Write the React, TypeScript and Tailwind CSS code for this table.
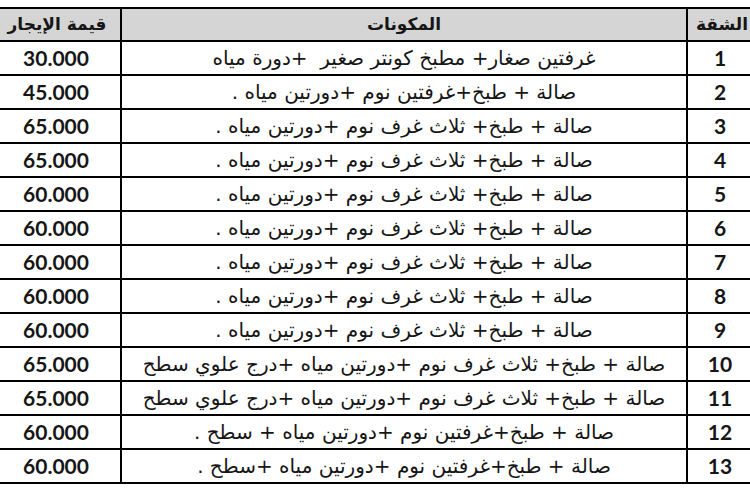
import React from 'react';

type Row = { no: string; desc: string; price: string };

const three = 'صالة + طبخ+ ثلاث غرف نوم +دورتين مياه .';
const upper = 'صالة + طبخ+ ثلاث غرف نوم +دورتين مياه +درج علوي سطح';

const rows: Row[] = [
  { no: '1', desc: 'غرفتين صغار+ مطبخ كونتر صغير  +دورة مياه', price: '30.000' },
  { no: '2', desc: 'صالة + طبخ+غرفتين نوم +دورتين مياه .', price: '45.000' },
  { no: '3', desc: three, price: '65.000' },
  { no: '4', desc: three, price: '65.000' },
  { no: '5', desc: three, price: '60.000' },
  { no: '6', desc: three, price: '60.000' },
  { no: '7', desc: three, price: '60.000' },
  { no: '8', desc: three, price: '60.000' },
  { no: '9', desc: three, price: '60.000' },
  { no: '10', desc: upper, price: '65.000' },
  { no: '11', desc: upper, price: '65.000' },
  { no: '12', desc: 'صالة + طبخ+غرفتين نوم +دورتين مياه + سطح .', price: '60.000' },
  { no: '13', desc: 'صالة + طبخ+غرفتين نوم +دورتين مياه +سطح .', price: '60.000' },
];

const headCell =
  "h-[33px] border-b-2 border-black bg-[#d5d5d5] flex items-center justify-center text-[17px] font-bold font-['DejaVu_Sans',sans-serif]";
const numCell =
  "h-[34px] border-b-2 border-black flex items-center justify-center text-[21px] font-bold font-['Lato','Open_Sans',sans-serif]";

export default function App() {
  return (
    <div className="w-[750px] h-[496px] overflow-hidden bg-white pt-[7px] text-[#161616]">
      <div className="ml-[-6px] w-[758px] border-t-2 border-black">
        <div dir="rtl" className="grid grid-cols-[66px_566px_126px]">
          {/* header */}
          <div className={`${headCell} border-l-2 pl-[4px]`}>الشقة</div>
          <div className={`${headCell} border-l-2`}>المكونات</div>
          <div className={headCell}>قيمة الإيجار</div>

          {rows.map(r => (
            <React.Fragment key={r.no}>
              <div className={`${numCell} border-l-2`}>{r.no}</div>
              <div className="h-[34px] border-l-2 border-b-2 border-black flex items-center justify-center text-[20px] whitespace-pre font-['DejaVu_Sans',sans-serif]">
                {r.desc}
              </div>
              <div dir="ltr" className={`${numCell} pr-[2px]`}>
                {r.price}
              </div>
            </React.Fragment>
          ))}
        </div>
      </div>
    </div>
  );
}
